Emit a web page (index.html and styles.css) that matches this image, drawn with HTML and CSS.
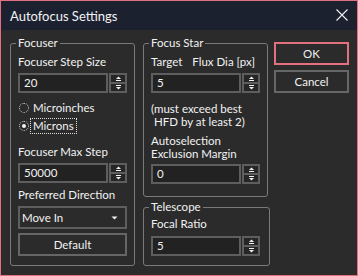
FILE: index.html
```html
<!DOCTYPE html>
<html>
<head>
<meta charset="utf-8">
<link rel="stylesheet" href="styles.css">
</head>
<body>
<div class="window">
  <div class="titlebar">
    <span class="title">Autofocus Settings</span>
    <svg class="close" width="12" height="12" viewBox="0 0 12 12"><path d="M0.5 0.5 L11.5 11.5 M11.5 0.5 L0.5 11.5" stroke="#f0f0f0" stroke-width="1.1" fill="none"/></svg>
  </div>
  <div class="body">
    <fieldset class="group focuser">
      <legend>Focuser</legend>
      <div class="label">Focuser Step Size</div>
      <div class="spin first">
        <div class="field">20</div>
        <div class="spinbtns">
          <span class="half"><svg width="7" height="5" viewBox="0 0 7 5"><path d="M1 3 L3.5 0.5 L6 3 Z" fill="#f0f0f0"/><rect x="1" y="4" width="5" height="1" fill="#f0f0f0"/></svg></span>
          <span class="half down"><svg width="7" height="5" viewBox="0 0 7 5"><rect x="1" y="0" width="5" height="1" fill="#f0f0f0"/><path d="M1 2 L3.5 4.5 L6 2 Z" fill="#f0f0f0"/></svg></span>
        </div>
      </div>
      <div class="radios">
        <div class="radio"><span class="dot"></span><span class="rtext">Microinches</span></div>
        <div class="radio checked"><span class="dot"></span><span class="rtext focus">Microns</span></div>
      </div>
      <div class="label maxstep">Focuser Max Step</div>
      <div class="spin">
        <div class="field">50000</div>
        <div class="spinbtns">
          <span class="half"><svg width="7" height="5" viewBox="0 0 7 5"><path d="M1 3 L3.5 0.5 L6 3 Z" fill="#f0f0f0"/><rect x="1" y="4" width="5" height="1" fill="#f0f0f0"/></svg></span>
          <span class="half down"><svg width="7" height="5" viewBox="0 0 7 5"><rect x="1" y="0" width="5" height="1" fill="#f0f0f0"/><path d="M1 2 L3.5 4.5 L6 2 Z" fill="#f0f0f0"/></svg></span>
        </div>
      </div>
      <div class="label pref">Preferred Direction</div>
      <div class="combo">
        <span>Move In</span>
        <svg width="7" height="4" viewBox="0 0 7 4"><path d="M0.5 0.5 L6.5 0.5 L3.5 3.5 Z" fill="#f0f0f0"/></svg>
      </div>
      <div class="btn default">Default</div>
    </fieldset>

    <div class="col2">
      <fieldset class="group star">
        <legend>Focus Star</legend>
        <div class="label"><span>Target</span><span class="flux">Flux Dia [px]</span></div>
        <div class="spin first">
          <div class="field">5</div>
          <div class="spinbtns">
            <span class="half"><svg width="7" height="5" viewBox="0 0 7 5"><path d="M1 3 L3.5 0.5 L6 3 Z" fill="#f0f0f0"/><rect x="1" y="4" width="5" height="1" fill="#f0f0f0"/></svg></span>
            <span class="half down"><svg width="7" height="5" viewBox="0 0 7 5"><rect x="1" y="0" width="5" height="1" fill="#f0f0f0"/><path d="M1 2 L3.5 4.5 L6 2 Z" fill="#f0f0f0"/></svg></span>
          </div>
        </div>
        <div class="note">(must exceed best<br>&nbsp;HFD by at least 2)</div>
        <div class="note auto">Autoselection<br>Exclusion Margin</div>
        <div class="spin tight">
          <div class="field">0</div>
          <div class="spinbtns">
            <span class="half"><svg width="7" height="5" viewBox="0 0 7 5"><path d="M1 3 L3.5 0.5 L6 3 Z" fill="#f0f0f0"/><rect x="1" y="4" width="5" height="1" fill="#f0f0f0"/></svg></span>
            <span class="half down"><svg width="7" height="5" viewBox="0 0 7 5"><rect x="1" y="0" width="5" height="1" fill="#f0f0f0"/><path d="M1 2 L3.5 4.5 L6 2 Z" fill="#f0f0f0"/></svg></span>
          </div>
        </div>
      </fieldset>
      <fieldset class="group telescope">
        <legend>Telescope</legend>
        <div class="label">Focal Ratio</div>
        <div class="spin tel">
          <div class="field">5</div>
          <div class="spinbtns">
            <span class="half"><svg width="7" height="5" viewBox="0 0 7 5"><path d="M1 3 L3.5 0.5 L6 3 Z" fill="#f0f0f0"/><rect x="1" y="4" width="5" height="1" fill="#f0f0f0"/></svg></span>
            <span class="half down"><svg width="7" height="5" viewBox="0 0 7 5"><rect x="1" y="0" width="5" height="1" fill="#f0f0f0"/><path d="M1 2 L3.5 4.5 L6 2 Z" fill="#f0f0f0"/></svg></span>
          </div>
        </div>
      </fieldset>
    </div>

    <div class="col3">
      <div class="btn ok">OK</div>
      <div class="btn cancel">Cancel</div>
    </div>
  </div>
</div>
</body>
</html>
```
FILE: styles.css
```css
* { box-sizing: border-box; }
html, body { margin: 0; padding: 0; }
body {
  background: #2b2b2b;
  font-family: Lato, "Liberation Sans", sans-serif;
  font-size: 11.5px;
  color: #f2f2f2;
}
.window {
  width: 358px;
  height: 276px;
  border: 1px solid #e2707e;
  background: #2b2b2b;
  display: flex;
  flex-direction: column;
}
.titlebar {
  height: 29px;
  flex: none;
  background: #1c2130;
  display: flex;
  align-items: center;
  justify-content: space-between;
  padding: 0 9px 0 9px;
}
.title { font-size: 13px; line-height: 16px; }
.close { display: block; margin-top: -2px; }
.body {
  flex: 1;
  display: flex;
  padding: 6px 0 9px 9px;
}
.group {
  margin: 0;
  border: 1px solid #7a7a7a;
  border-radius: 3px;
  padding: 5px 7px 7px 7px;
  min-width: 0;
}
.group legend {
  padding: 0 2px;
  margin-left: -2px;
  line-height: 14px;
  height: 14px;
}
.focuser { width: 125px; margin-right: 8px; }
.col2 {
  width: 127px;
  margin-right: 4px;
  display: flex;
  flex-direction: column;
  gap: 3px;
}
.star { width: 125px; height: 161px; flex: none; }
.telescope { width: 127px; flex: 1; padding-top: 3px; }
.col3 {
  width: 75px;
  margin-top: 6px;
  display: flex;
  flex-direction: column;
  gap: 5px;
}
.label { line-height: 14px; height: 14px; white-space: nowrap; }
.flux { margin-left: 10px; }
.spin { display: flex; gap: 1px; height: 20px; margin-top: 4px; }
.spin.tel { margin-top: 5px; }
.field {
  width: 90px;
  border: 2px solid #5e5e5e;
  background: #222222;
  padding-left: 4px;
  line-height: 16px;
}
.spinbtns {
  width: 18px;
  border: 2px solid #5e5e5e;
  display: flex;
  flex-direction: column;
  background: #262626;
}
.half {
  flex: 1;
  display: flex;
  align-items: center;
  justify-content: center;
}
.half svg { display: block; }
.half.down { border-top: 2px solid #5e5e5e; }
.radios {
  margin-top: 6px;
  display: flex;
  flex-direction: column;
  gap: 1px;
}
.radio { height: 17px; display: flex; align-items: center; }
.dot {
  width: 10px;
  height: 10px;
  margin-left: 1px;
  border: 1px dotted #d0d0d0;
  border-radius: 50%;
  display: flex;
  align-items: center;
  justify-content: center;
}
.checked .dot::after {
  content: "";
  width: 4px;
  height: 4px;
  border-radius: 50%;
  background: #f4f4f4;
}
.rtext { margin-left: 4px; line-height: 14px; }
.rtext.focus {
  margin-left: 2px;
  padding: 0 2px;
  outline: 1px dotted #e0e0e0;
  outline-offset: 0;
}
.maxstep { margin-top: 11px; }
.pref { margin-top: 5px; }
.combo {
  margin-top: 4px;
  height: 23px;
  border: 2px solid #5e5e5e;
  background: #2b2b2b;
  display: flex;
  align-items: center;
  justify-content: space-between;
  padding: 0 7px 0 2px;
}
.combo svg { display: block; }
.btn {
  height: 23px;
  border: 2px solid #666666;
  display: flex;
  align-items: center;
  justify-content: center;
}
.default { margin-top: 4px; }
.ok { border-color: #e2707e; }
.note { line-height: 13px; margin-top: 9px; white-space: nowrap; }
.note.auto { margin-top: 6px; }
.spin.tight { margin-top: 4px; }
```
